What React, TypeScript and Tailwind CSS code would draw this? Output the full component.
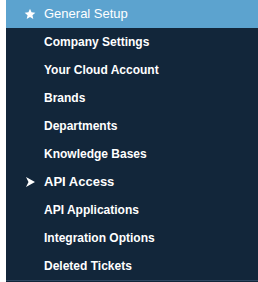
import React from "react";

const items = [
  "Company Settings",
  "Your Cloud Account",
  "Brands",
  "Departments",
  "Knowledge Bases",
  "API Access",
  "API Applications",
  "Integration Options",
  "Deleted Tickets",
];

export default function App() {
  return (
    <div
      className="w-[258px] h-[282px] bg-white pl-[6px] overflow-hidden"
      style={{ fontFamily: '"Liberation Sans", Arial, sans-serif' }}
    >
      <div className="flex flex-col bg-[#12263a]">
        <div className="h-[28px] bg-[#5ca3cf] flex items-center text-white">
          <div className="w-[38px] flex justify-end pr-[8px]">
            <svg width="12" height="12" viewBox="0 0 24 24" fill="white">
              <path d="M12 1.5l3.1 7.1 7.6.7-5.8 5.1 1.7 7.5L12 17.9l-6.6 4 1.7-7.5-5.8-5.1 7.6-.7z" />
            </svg>
          </div>
          <span className="text-[13px]">General Setup</span>
        </div>
        {items.map((it) => (
          <div key={it} className="h-[28px] flex items-center text-white">
            <div className="w-[38px] flex justify-end pr-[9px]">
              {it === "API Access" && (
                <svg width="9" height="10" viewBox="0 0 9 10" fill="white">
                  <path d="M0 0L9 5L0 10L2.5 5Z" />
                </svg>
              )}
            </div>
            <span
              className={
                it === "API Access"
                  ? "text-[13px] font-bold"
                  : "text-[12px] font-bold"
              }
            >
              {it}
            </span>
          </div>
        ))}
        <div className="h-[1px] bg-[#2e4660]" />
        <div className="h-[2px] bg-[#12263a]" />
      </div>
    </div>
  );
}
